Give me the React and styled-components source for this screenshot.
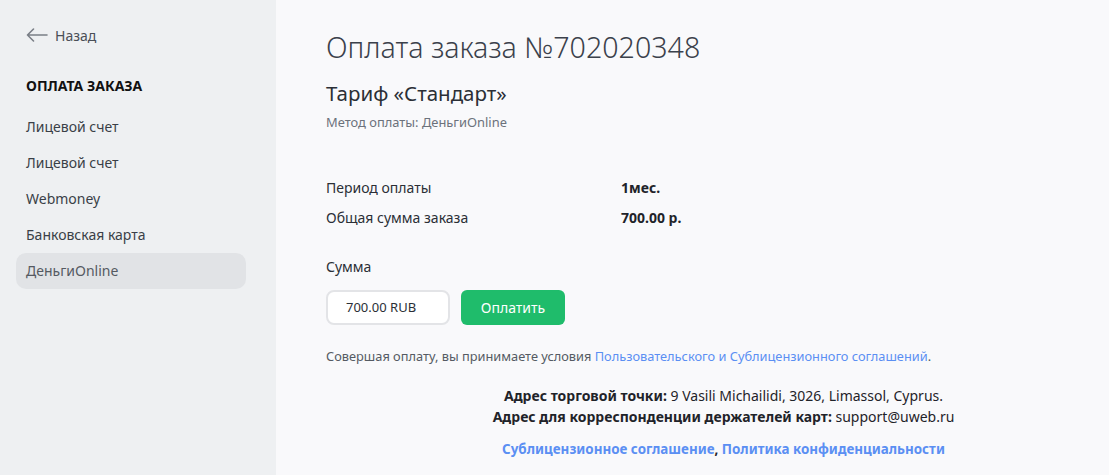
import React from "react";
import styled, { createGlobalStyle } from "styled-components";

const Global = createGlobalStyle`
  body {
    margin: 0;
    font-family: "Noto Sans", "Open Sans", sans-serif;
    background: #f9f9fb;
    color: #2b2f36;
  }
`;

const Page = styled.div`
  display: flex;
  min-height: 475px;
`;

const Sidebar = styled.aside`
  width: 276px;
  flex-shrink: 0;
  background: #eef0f2;
  padding: 25px 30px 0 16px;
  box-sizing: border-box;
`;

const Back = styled.a`
  display: flex;
  align-items: center;
  gap: 7px;
  padding-left: 10px;
  font-size: 14px;
  color: #4a4f57;
  text-decoration: none;
  height: 20px;
`;

const MenuTitle = styled.div`
  margin-top: 31px;
  padding-left: 10px;
  font-size: 14px;
  font-weight: 700;
  color: #111;
  height: 20px;
  line-height: 20px;
`;

const Menu = styled.ul`
  list-style: none;
  margin: 13px 0 0;
  padding: 0;
`;

const MenuItem = styled.li`
  height: 36px;
  line-height: 36px;
  padding-left: 10px;
  font-size: 14px;
  border-radius: 10px;
  color: ${p => (p.active ? "#555a62" : "#3a3f47")};
  background: ${p => (p.active ? "#e1e3e6" : "transparent")};
`;

const Main = styled.main`
  flex: 1;
  padding: 27px 50px 0;
`;

const Title = styled.h1`
  margin: 0;
  font-size: 28.6px;
  font-weight: 300;
  color: #3b414b;
  line-height: 40px;
`;

const Tariff = styled.h2`
  margin: 12px 0 0;
  font-size: 20.5px;
  font-weight: 400;
  color: #2b2f36;
  line-height: 28px;
`;

const Method = styled.div`
  margin-top: 6px;
  font-size: 12.9px;
  color: #6c727b;
`;

const Details = styled.div`
  margin-top: 47px;
  display: grid;
  grid-template-columns: 295px auto;
  row-gap: 10px;
  font-size: 14px;
  line-height: 20px;
`;

const Value = styled.div`
  font-weight: 700;
  color: #1f2329;
`;

const Label = styled.div`
  margin-top: 29px;
  font-size: 14px;
  line-height: 20px;
`;

const PayRow = styled.div`
  display: flex;
  gap: 11px;
  margin-top: 13px;
`;

const Amount = styled.div`
  width: 124px;
  height: 35px;
  box-sizing: border-box;
  border: 2px solid #e3e4e7;
  border-radius: 8px;
  background: #fff;
  padding-left: 18px;
  font-size: 13px;
  line-height: 31px;
  color: #2b2f36;
`;

const PayButton = styled.button`
  width: 104px;
  height: 35px;
  border: 0;
  border-radius: 6px;
  background: #1fbc6b;
  color: #fff;
  font-family: inherit;
  font-size: 14px;
`;

const Terms = styled.p`
  margin: 21px 0 0;
  font-size: 12.8px;
  color: #555b63;
  line-height: 20px;
`;

const Link = styled.a`
  color: #5b8ff3;
  text-decoration: none;
  font-weight: ${p => (p.bold ? 700 : 400)};
`;

const Footer = styled.div`
  margin-top: 19px;
  padding-left: 62px;
  text-align: center;
  font-size: 14px;
  line-height: 21px;
  color: #1f2329;
  b {
    font-weight: 700;
  }
`;

const FooterLinks = styled.div`
  margin-top: 12px;
  font-size: 13.4px;
  color: #1f2329;
  font-weight: 700;
`;

export default function App() {
  const items = ["Лицевой счет", "Лицевой счет", "Webmoney", "Банковская карта", "ДеньгиOnline"];
  return (
    <Page>
      <Global />
      <Sidebar>
        <Back href="#">
          <svg width="22" height="14" viewBox="0 0 22 14" fill="none" stroke="#7a7f87" strokeWidth="1.6" strokeLinecap="round" strokeLinejoin="round">
            <path d="M21 7H1.5M7.5 1L1.5 7l6 6" />
          </svg>
          Назад
        </Back>
        <MenuTitle>ОПЛАТА ЗАКАЗА</MenuTitle>
        <Menu>
          {items.map((t, i) => (
            <MenuItem key={i} active={i === items.length - 1}>{t}</MenuItem>
          ))}
        </Menu>
      </Sidebar>
      <Main>
        <Title>Оплата заказа №702020348</Title>
        <Tariff>Тариф «Стандарт»</Tariff>
        <Method>Метод оплаты: ДеньгиOnline</Method>
        <Details>
          <div>Период оплаты</div>
          <Value>1мес.</Value>
          <div>Общая сумма заказа</div>
          <Value>700.00 р.</Value>
        </Details>
        <Label>Сумма</Label>
        <PayRow>
          <Amount>700.00 RUB</Amount>
          <PayButton>Оплатить</PayButton>
        </PayRow>
        <Terms>
          Совершая оплату, вы принимаете условия{" "}
          <Link href="#">Пользовательского и Сублицензионного соглашений</Link>.
        </Terms>
        <Footer>
          <div><b>Адрес торговой точки:</b> 9 Vasili Michailidi, 3026, Limassol, Cyprus.</div>
          <div><b>Адрес для корреспонденции держателей карт:</b> support@uweb.ru</div>
          <FooterLinks>
            <Link href="#" bold>Сублицензионное соглашение</Link>, <Link href="#" bold>Политика конфиденциальности</Link>
          </FooterLinks>
        </Footer>
      </Main>
    </Page>
  );
}
